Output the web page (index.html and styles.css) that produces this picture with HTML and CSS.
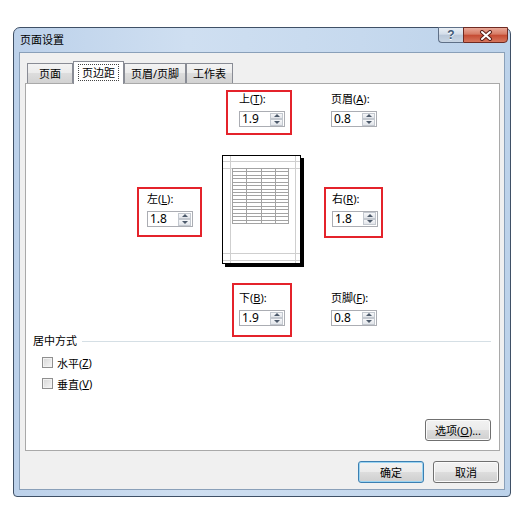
FILE: index.html
```html
<!DOCTYPE html>
<html lang="zh-CN">
<head>
  <meta charset="UTF-8">
  <title>页面设置</title>
  <link rel="stylesheet" href="styles.css">
</head>
<body>
  <div class="window">
    <div class="titlebar">
      <span class="title">页面设置</span>
      <div class="caption-btns">
        <div class="cap-help">?</div>
        <div class="cap-close">
          <svg width="14" height="11" viewBox="0 0 14 11">
            <path d="M3 2L11 9M11 2L3 9" stroke="#5a2019" stroke-width="4" stroke-linecap="round"/>
            <path d="M3 2L11 9M11 2L3 9" stroke="#fff" stroke-width="2" stroke-linecap="round"/>
          </svg>
        </div>
      </div>
    </div>

    <div class="client">
      <div class="tabs">
        <div class="tab">页面</div>
        <div class="tab active"><span class="focus">页边距</span></div>
        <div class="tab">页眉/页脚</div>
        <div class="tab">工作表</div>
      </div>

      <div class="panel">
        <div class="margins">
          <div class="field box box-top">
            <div class="field-label">上(<u>T</u>):</div>
            <div class="spin"><span class="spin-value">1.9</span><span class="spin-btns"><span class="spin-up"></span><span class="spin-down"></span></span></div>
          </div>
          <div class="field plain-top">
            <div class="field-label">页眉(<u>A</u>):</div>
            <div class="spin"><span class="spin-value">0.8</span><span class="spin-btns"><span class="spin-up"></span><span class="spin-down"></span></span></div>
          </div>

          <div class="field box box-left">
            <div class="field-label">左(<u>L</u>):</div>
            <div class="spin"><span class="spin-value">1.8</span><span class="spin-btns"><span class="spin-up"></span><span class="spin-down"></span></span></div>
          </div>
          <svg class="preview" width="82" height="112" viewBox="0 0 82 112">
            <rect x="3" y="3" width="79" height="109" fill="#000"/>
            <rect x="0.5" y="0.5" width="78" height="108" fill="#fff" stroke="#000"/>
            <path d="M8.5 1V108M73.5 1V108M1 6.5H78M1 13.5H78M1 98.5H78M1 105.5H78" stroke="#cfcfcf" fill="none"/>
            <path d="M10 13.5H67M10 16.5H67M10 20.5H67M10 23.5H67M10 27.5H67M10 30.5H67M10 34.5H67M10 37.5H67M10 40.5H67M10 44.5H67M10 47.5H67M10 51.5H67M10 54.5H67M10 58.5H67M10 61.5H67M10 65.5H67M10 68.5H67M10.5 13V69M24.5 13V69M39.5 13V69M53.5 13V69M66.5 13V69" stroke="#a3a3a3" fill="none"/>
          </svg>
          <div class="field box box-right">
            <div class="field-label">右(<u>R</u>):</div>
            <div class="spin"><span class="spin-value">1.8</span><span class="spin-btns"><span class="spin-up"></span><span class="spin-down"></span></span></div>
          </div>

          <div class="field box box-bottom">
            <div class="field-label">下(<u>B</u>):</div>
            <div class="spin"><span class="spin-value">1.9</span><span class="spin-btns"><span class="spin-up"></span><span class="spin-down"></span></span></div>
          </div>
          <div class="field plain-bottom">
            <div class="field-label">页脚(<u>F</u>):</div>
            <div class="spin"><span class="spin-value">0.8</span><span class="spin-btns"><span class="spin-up"></span><span class="spin-down"></span></span></div>
          </div>
        </div>

        <div class="group-title"><span>居中方式</span><span class="rule"></span></div>
        <div class="checks">
          <div class="check"><span class="checkbox"></span>水平(<u>Z</u>)</div>
          <div class="check"><span class="checkbox"></span>垂直(<u>V</u>)</div>
        </div>

        <button class="btn btn-options">选项(<u>O</u>)...</button>
      </div>

      <div class="footer">
        <button class="btn btn-default">确定</button>
        <button class="btn">取消</button>
      </div>
    </div>
  </div>
</body>
</html>
```

FILE: styles.css
```css
* {
  box-sizing: border-box;
}
body {
  margin: 0;
  background: #fff;
  font-family: "Noto Sans", "Noto Sans CJK SC", sans-serif;
  font-size: 11px;
  color: #000;
}

/* 窗口外框 */
.window {
  width: 498px;
  height: 470px;
  margin: 27px 0 0 13px;
  border: 1px solid #3f5066;
  border-radius: 7px 7px 4px 4px;
  background: linear-gradient(90deg, #bcd1ea 0%, #cfdff1 35%, #c6d9ee 70%, #bcd2ea 100%);
  padding: 0 5px 6px;
  display: flex;
  flex-direction: column;
}
.titlebar {
  height: 24px;
  margin: 0 -5px;
  padding-left: 6px;
  display: flex;
  justify-content: space-between;
  align-items: flex-start;
}
.title {
  line-height: 24px;
}
.caption-btns {
  display: flex;
  margin-top: -1px;
  margin-right: 2px;
}
.cap-help {
  width: 25px;
  height: 16px;
  border: 1px solid #5f7087;
  border-right: none;
  border-radius: 0 0 0 4px;
  background: linear-gradient(#eaf0f6, #d3dde9 45%, #b9c7d8 50%, #c9d6e4);
  color: #435a78;
  font-family: "Liberation Sans", sans-serif;
  font-size: 12px;
  font-weight: bold;
  line-height: 14px;
  text-align: center;
  text-shadow: 0 1px 0 #fff;
}
.cap-close {
  width: 45px;
  height: 16px;
  border: 1px solid #6e2a22;
  border-radius: 0 0 4px 0;
  background: linear-gradient(#e9a898, #d67a64 45%, #c54a32 50%, #d6765d);
  display: flex;
  align-items: center;
  justify-content: center;
}

/* 客户区 */
.client {
  flex: 1;
  border: 1px solid #8aa0b9;
  background: #f0f0f0;
  padding: 8px 4px 0 5px;
  display: flex;
  flex-direction: column;
}

/* 选项卡 */
.tabs {
  display: flex;
  align-items: flex-end;
  height: 22px;
  padding-left: 2px;
  position: relative;
  z-index: 1;
}
.tab {
  height: 20px;
  min-width: 46px;
  padding: 0 6px;
  line-height: 19px;
  text-align: center;
  white-space: nowrap;
  border: 1px solid #898c95;
  border-bottom: none;
  background: linear-gradient(#f3f3f3, #ebebeb 50%, #dddddd 50%, #d2d2d2);
}
.tab.active {
  height: 23px;
  margin-bottom: -1px;
  padding: 1px 5px 0;
  background: #fff;
}
.focus {
  display: inline-block;
  line-height: 15px;
  padding: 0 3px;
  outline: 1px dotted #444;
}

.panel {
  height: 368px;
  background: #fff;
  border: 1px solid #a9a9a9;
  display: flex;
  flex-direction: column;
}

/* 页边距布局 */
.margins {
  display: grid;
  grid-template-columns: 1fr 81px 1fr;
  grid-template-rows: auto auto auto;
  column-gap: 20px;
  row-gap: 16px;
  padding-top: 6px;
  justify-items: start;
  align-items: start;
}
.field-label {
  height: 14px;
  line-height: 14px;
  margin-bottom: 5px;
  white-space: nowrap;
}
.spin {
  width: 46px;
  height: 16px;
  border: 1px solid #abadb3;
  background: #fff;
  display: flex;
  align-items: center;
}
.spin-value {
  padding-left: 2px;
  font-size: 12px;
  line-height: 14px;
}
.spin-btns {
  margin-left: auto;
  margin-right: 1px;
  width: 13px;
  height: 13px;
  display: flex;
  flex-direction: column;
}
.spin-up,
.spin-down {
  flex: 1;
  border: 1px solid #c3c8cf;
  background: linear-gradient(#f6f7f9, #e2e5ea);
  display: flex;
  align-items: center;
  justify-content: center;
}
.spin-up::before,
.spin-down::before {
  content: "";
  border-left: 3px solid transparent;
  border-right: 3px solid transparent;
}
.spin-up::before {
  border-bottom: 3px solid #4d5a6b;
}
.spin-down::before {
  border-top: 3px solid #4d5a6b;
}

.box {
  border: 2px solid #e4232b;
}
.box-top {
  grid-column: 2;
  grid-row: 1;
  margin-left: 4px;
  padding: 0 5px 6px 11px;
}
.plain-top {
  grid-column: 3;
  grid-row: 1;
  margin: 2px 0 0 8px;
}
.box-left {
  grid-column: 1;
  grid-row: 2;
  justify-self: end;
  align-self: center;
  margin-top: 6px;
  padding: 3px 7px 8px 8px;
}
.preview {
  grid-column: 2;
  grid-row: 2;
  display: block;
  margin-top: 4px;
}
.box-right {
  grid-column: 3;
  grid-row: 2;
  align-self: center;
  margin: 6px 0 0 1px;
  padding: 3px 3px 9px 6px;
}
.box-bottom {
  grid-column: 2;
  grid-row: 3;
  margin-left: 10px;
  padding: 6px 5px 9px 5px;
}
.plain-bottom {
  grid-column: 3;
  grid-row: 3;
  margin: 8px 0 0 8px;
}

/* 居中方式 */
.group-title {
  display: flex;
  align-items: center;
  margin: -3px 8px 0 7px;
  line-height: 14px;
}
.group-title .rule {
  flex: 1;
  height: 1px;
  margin-left: 5px;
  background: #d5dfe5;
}
.checks {
  margin-top: 4px;
}
.check {
  display: flex;
  align-items: center;
  height: 21px;
  padding-left: 16px;
}
.checkbox {
  width: 11px;
  height: 11px;
  margin-right: 4px;
  border: 1px solid #8f8f8f;
  background: linear-gradient(135deg, #d6d6d6, #f6f6f6);
  box-shadow: inset 0 0 0 1px #f2f2f2;
}

/* 按钮 */
.btn {
  width: 66px;
  height: 22px;
  padding: 0;
  border: 1px solid #707070;
  border-radius: 3px;
  background: linear-gradient(#f2f2f2 0%, #ebebeb 49%, #dddddd 50%, #cfcfcf 100%);
  box-shadow: inset 0 0 0 1px #fbfbfb;
  font: inherit;
  font-size: 11px;
  color: #000;
}
.btn-options {
  align-self: flex-end;
  margin: auto 8px 9px 0;
}
.btn-default {
  border-color: #3c7fb1;
  box-shadow: inset 0 0 0 1px #9bd4f2;
}
.footer {
  display: flex;
  justify-content: flex-end;
  gap: 9px;
  margin-top: 10px;
  padding-right: 1px;
}
```
